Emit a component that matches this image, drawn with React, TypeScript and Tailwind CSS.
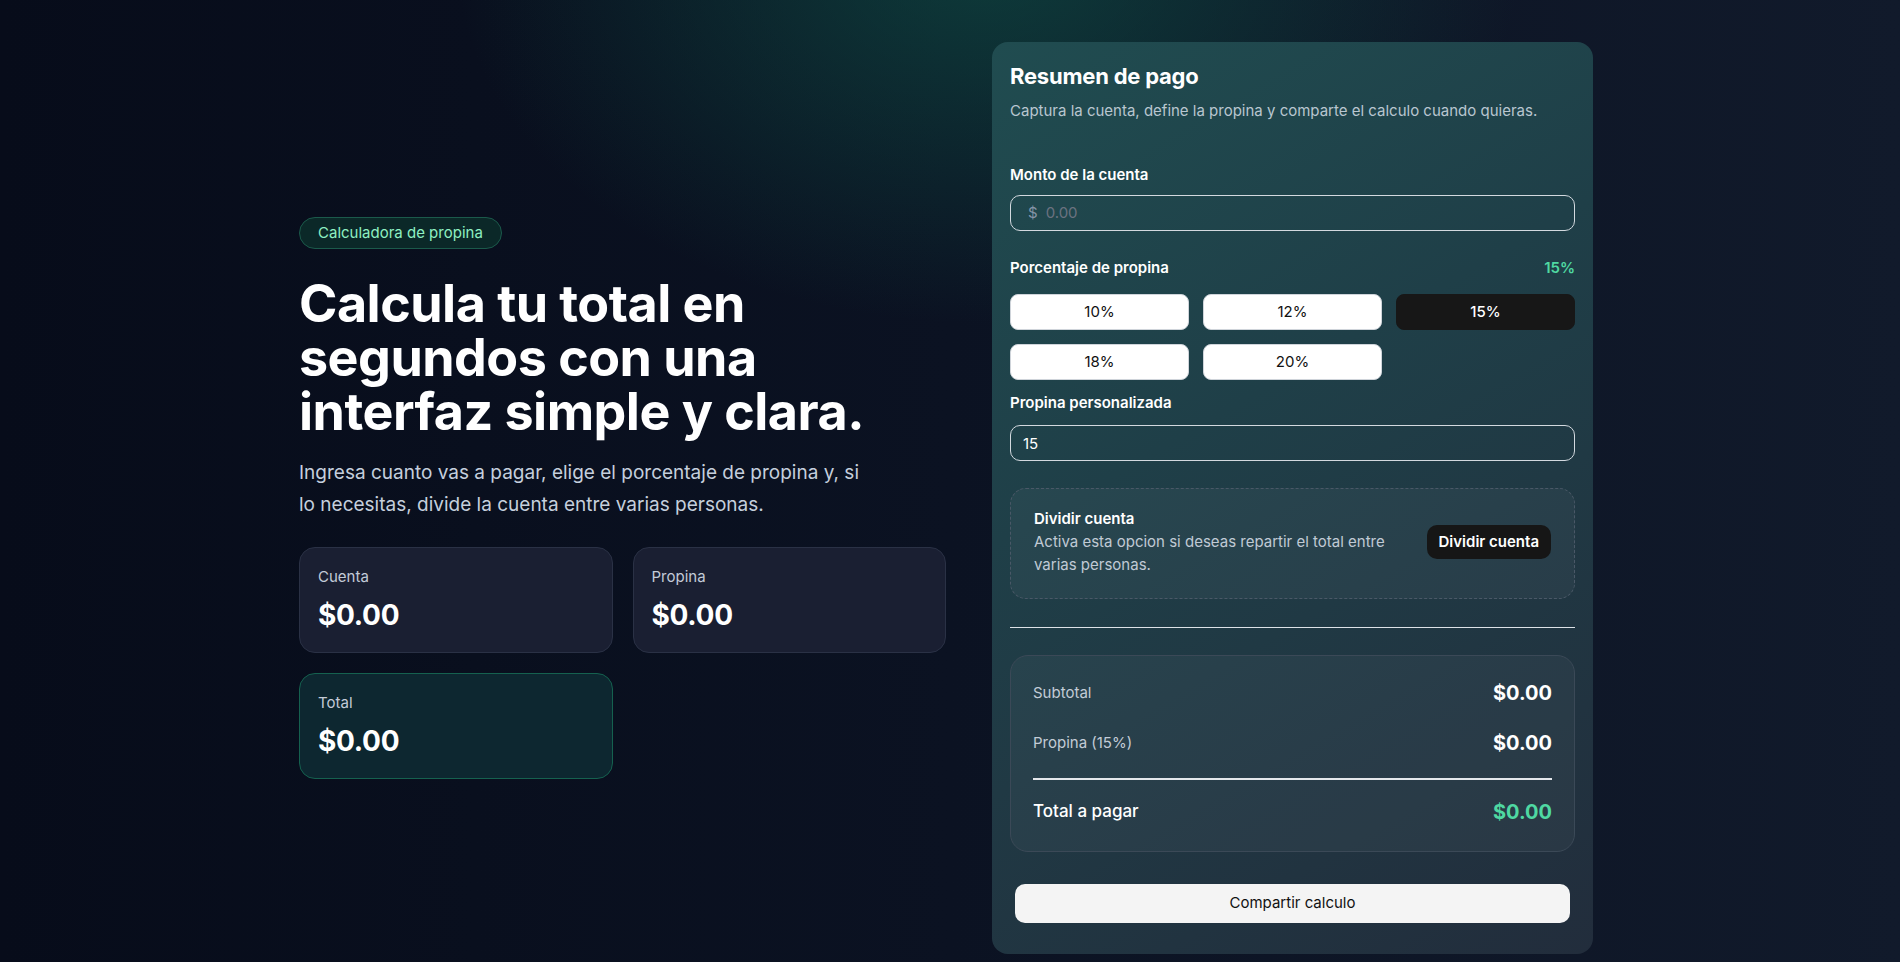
import { useState } from 'react';

const tipOptions = [10, 12, 15, 18, 20];

function formatMoney(value: number) {
    return `$${value.toFixed(2)}`;
}

function StatCard({ label, value, highlight = false }: { label: string; value: string; highlight?: boolean }) {
    return (
        <div
            className={`rounded-2xl border px-[18px] pt-[18px] pb-5 ${
                highlight ? 'border-[#15614f] bg-[#0d2730]' : 'border-[#2a3145] bg-[#1a1f32]'
            }`}
        >
            <p className="text-[15px] leading-[22px] text-[#c3cbd8]">{label}</p>
            <p className="mt-[10px] text-[28px] leading-[34px] font-bold tracking-[-0.01em] text-white">{value}</p>
        </div>
    );
}

export default function App() {
    const [bill, setBill] = useState('');
    const [tip, setTip] = useState(15);
    const [customTip, setCustomTip] = useState('15');

    const billAmount = Number(bill) || 0;
    const tipAmount = (billAmount * tip) / 100;
    const total = billAmount + tipAmount;

    const selectTip = (value: number) => {
        setTip(value);
        setCustomTip(String(value));
    };

    return (
        <div className="min-h-screen bg-[#0b1222] bg-[radial-gradient(ellipse_760px_520px_at_52%_-4%,rgba(16,92,78,0.55),transparent_70%),linear-gradient(90deg,#070c1a_0%,#0b1222_50%,#111a2b_100%)] font-['Inter',sans-serif]">
            <div className="mx-auto flex max-w-[1302px] items-center gap-[46px] py-[42px] pr-2">
                <section className="flex w-[647px] flex-col items-start">
                    <span className="inline-flex h-8 items-center rounded-full border border-[#1b5a4b] bg-[#0b2828] px-[18px] text-[15px] text-[#8ef0c2]">
                        Calculadora de propina
                    </span>
                    <h1 className="mt-[28px] max-w-[600px] text-[52px] leading-[54px] font-bold tracking-[-0.01em] text-white">
                        Calcula tu total en segundos con una interfaz simple y clara.
                    </h1>
                    <p className="mt-[18px] max-w-[574px] text-[19px] leading-[32px] text-[#c5cfdd]">
                        Ingresa cuanto vas a pagar, elige el porcentaje de propina y, si lo necesitas, divide la cuenta entre varias personas.
                    </p>
                    <div className="mt-[26px] grid w-full grid-cols-2 gap-5">
                        <StatCard label="Cuenta" value={formatMoney(billAmount)} />
                        <StatCard label="Propina" value={formatMoney(tipAmount)} />
                        <StatCard label="Total" value={formatMoney(total)} highlight />
                    </div>
                </section>

                <section className="w-[601px] rounded-2xl bg-[linear-gradient(150deg,#204c50_0%,#1f3f48_40%,#222d3c_100%)] px-[18px] pt-5 pb-[31px]">
                    <h2 className="text-[22px] leading-[28px] font-bold tracking-[-0.01em] text-white">Resumen de pago</h2>
                    <p className="mt-[10px] text-[15px] leading-[22px] text-[#b9c6d0]">
                        Captura la cuenta, define la propina y comparte el calculo cuando quieras.
                    </p>

                    <label className="mt-[42px] block text-[15px] leading-[22px] font-semibold text-white">Monto de la cuenta</label>
                    <div className="mt-[9px] flex h-9 items-center gap-2 rounded-[10px] border border-[#d3d9df] pl-[17px]">
                        <span className="text-[15px] text-[#8595a8]">$</span>
                        <input
                            value={bill}
                            onChange={(e) => setBill(e.target.value)}
                            placeholder="0.00"
                            className="w-full bg-transparent text-[15px] text-white outline-none placeholder:text-[#6b7280]"
                        />
                    </div>

                    <div className="mt-[26px] flex items-center justify-between text-[15px] leading-[22px] font-semibold">
                        <span className="text-white">Porcentaje de propina</span>
                        <span className="text-[#4fd8a2]">{tip}%</span>
                    </div>
                    <div className="mt-[15px] grid grid-cols-3 gap-3.5">
                        {tipOptions.map((option) => (
                            <button
                                key={option}
                                type="button"
                                onClick={() => selectTip(option)}
                                className={`h-9 rounded-lg border text-[15px] ${
                                    tip === option ? 'border-[#171717] bg-[#171717] font-medium text-white' : 'border-[#cfd4da] bg-white text-[#111111]'
                                }`}
                            >
                                {option}%
                            </button>
                        ))}
                    </div>

                    <label className="mt-[12px] block text-[15px] leading-[22px] font-semibold text-white">Propina personalizada</label>
                    <input
                        value={customTip}
                        onChange={(e) => {
                            setCustomTip(e.target.value);
                            setTip(Number(e.target.value) || 0);
                        }}
                        className="mt-[11px] h-9 w-full rounded-[10px] border border-[#d3d9df] bg-transparent px-3 text-[15px] text-white outline-none"
                    />

                    <div className="mt-[27px] flex items-center justify-between gap-4 rounded-2xl border border-dashed border-[#4a5867] bg-white/[0.04] px-[23px] pt-[19px] pb-[22px]">
                        <div>
                            <p className="text-[15px] leading-[22px] font-semibold text-white">Dividir cuenta</p>
                            <p className="text-[15px] leading-[23px] text-[#c0cad5]">
                                Activa esta opcion si deseas repartir el total entre varias personas.
                            </p>
                        </div>
                        <button type="button" className="h-[34px] shrink-0 rounded-[10px] bg-[#161616] px-3 text-[15px] font-semibold text-white">
                            Dividir cuenta
                        </button>
                    </div>

                    <div className="mt-7 h-px bg-[#dde2e7]" />

                    <div className="mt-[27px] rounded-[18px] border border-[#3b4957] bg-white/[0.04] px-[22px] pt-[23px] pb-[25px]">
                        <div className="flex h-7 items-center justify-between">
                            <span className="text-[15px] text-[#c3ccd6]">Subtotal</span>
                            <span className="text-[20px] font-bold text-white">{formatMoney(billAmount)}</span>
                        </div>
                        <div className="mt-[22px] flex h-7 items-center justify-between">
                            <span className="text-[15px] text-[#c3ccd6]">Propina ({tip}%)</span>
                            <span className="text-[20px] font-bold text-white">{formatMoney(tipAmount)}</span>
                        </div>
                        <div className="mt-[21px] h-[2px] bg-[#e4e7eb]" />
                        <div className="mt-[18px] flex h-7 items-center justify-between">
                            <span className="text-[17px] font-medium text-white">Total a pagar</span>
                            <span className="text-[20px] font-bold text-[#4fd8a2]">{formatMoney(total)}</span>
                        </div>
                    </div>

                    <button type="button" className="mx-[5px] mt-[32px] block h-[39px] w-[calc(100%-10px)] rounded-[10px] bg-[#f4f4f4] text-[15px] text-[#111111]">
                        Compartir calculo
                    </button>
                </section>
            </div>
        </div>
    );
}
